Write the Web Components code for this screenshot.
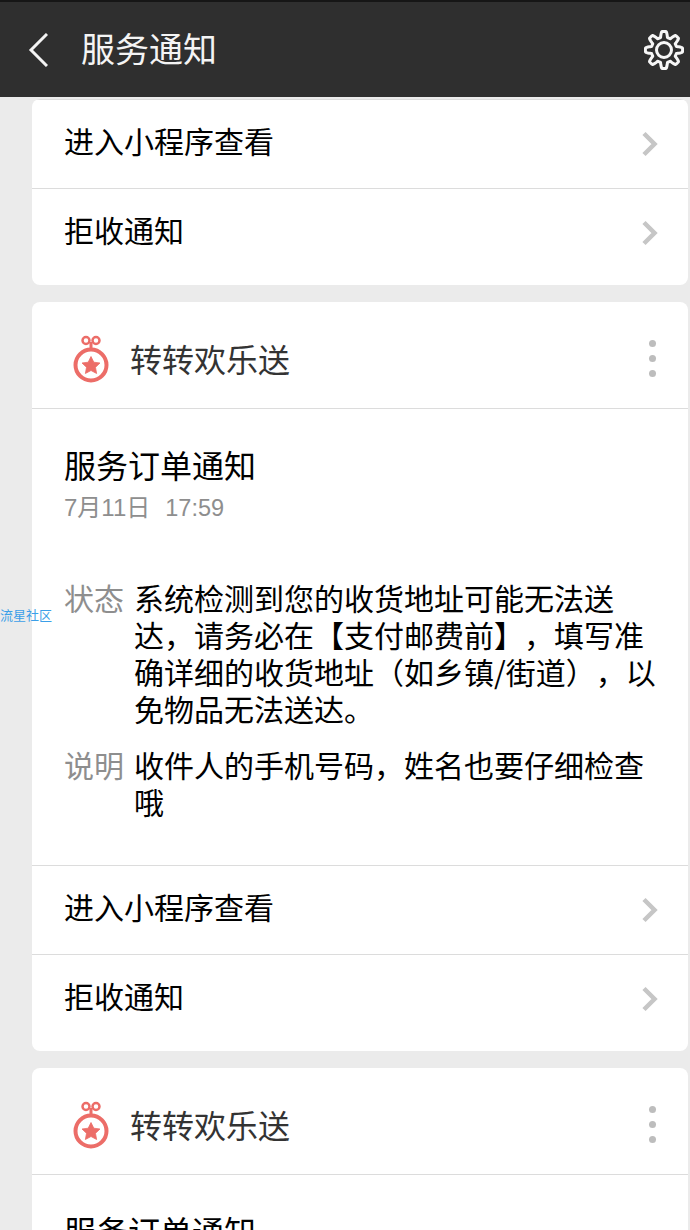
<!DOCTYPE html>
<html lang="zh"><head><meta charset="utf-8"><title>服务通知</title>
<style>
html,body{margin:0;padding:0;height:1230px;overflow:hidden;background:#ebebeb;font-family:"Noto Sans CJK SC","Noto Sans",sans-serif;}
main{display:flex;flex-direction:column;gap:17px;padding:2px 2px 0 32px;position:relative;}
water-mark{position:absolute;left:0;top:510px;}
</style></head><body>
<template id="t-header"><style>
:host{display:flex;align-items:center;height:97px;box-sizing:border-box;background:#2f2f2f;border-top:2px solid #161616;color:#f4f4f4;padding:0 6px 0 28px;}
h1{margin:0 0 0 33px;font:400 34px/44px "Noto Sans CJK SC",sans-serif;flex:1;position:relative;top:-2px;}
svg{display:block;}
</style><svg width="20" height="34" viewBox="0 0 20 34"><path d="M19 1 3 17l16 16" fill="none" stroke="#f4f4f4" stroke-width="3"/></svg><h1><slot></slot></h1>
<gear-icon></gear-icon>
</template>
<template id="t-card"><style>
:host{display:block;background:#fff;border-radius:8px;overflow:hidden;}
</style><slot></slot></template>
<template id="t-head"><style>
:host{display:flex;align-items:center;height:106px;border-bottom:1px solid #dcdcdc;padding:0 32px 0 41px;color:#333;font-size:32px;text-spacing-trim:space-all;}
span{flex:1;margin-left:21px;line-height:44px;position:relative;top:3px;}
i{display:flex;flex-direction:column;gap:8px;margin-top:6px;}
b{display:block;width:7px;height:7px;border-radius:50%;background:#bdbdbd;}
svg{display:block;margin-top:8px;}
</style>
<svg width="36" height="48" viewBox="0 0 36 48"><g fill="none" stroke="#ec6d68"><circle cx="18" cy="30" r="15.500" stroke-width="4"/><circle cx="13" cy="5.500" r="3.500" stroke-width="2.500"/><circle cx="23" cy="5.500" r="3.500" stroke-width="2.500"/><path d="M18 7v8" stroke-width="3"/></g><path d="M18 21.500l2.800 5.700 6.200.8-4.500 4.300 1.100 6.200-5.600-3-5.600 3 1.100-6.200L9 28l6.200-.8z" fill="#ec6d68" stroke="#ec6d68" stroke-width=".8" stroke-linejoin="round"/></svg>
<span><slot></slot></span><i><b></b><b></b><b></b></i></template>
<template id="t-body"><style>
:host{display:block;padding:35px 30px 45px 32px;color:#000;text-spacing-trim:space-all;}
h2{margin:0;font:400 32px/40px "Noto Sans CJK SC",sans-serif;}
time{display:block;margin-top:9px;font:24px/30px "Liberation Sans","Noto Sans CJK SC",sans-serif;color:#8e8e8e;}
.f{margin-top:56px;display:flex;flex-direction:column;gap:19px;}
</style><h2><slot name="title"></slot></h2><time><slot name="time"></slot></time><div class="f"><slot></slot></div></template>
<template id="t-field"><style>
:host{display:grid;grid-template-columns:70px 1fr;font-size:30px;line-height:37px;text-spacing-trim:space-all;}
span{color:#8e8e8e;}
div{color:#000;}
</style><span><slot name="k"></slot></span><div><slot></slot></div></template>
<template id="t-action"><style>
:host{display:flex;align-items:center;justify-content:space-between;height:88px;border-top:1px solid #dcdcdc;padding:0 30px 0 32px;font-size:30px;color:#000;}
:host([last]){padding-bottom:8px;}
span{position:relative;top:-4px;line-height:40px;}
svg{display:block;}
</style><span><slot></slot></span><svg width="17" height="26" viewBox="0 0 17 26"><path d="M3 2.500 13.500 13 3 23.500" fill="none" stroke="#c6c6c6" stroke-width="4.500"/></svg></template>
<template id="t-mark"><style>:host{display:block;font-size:13px;line-height:16px;color:#3b9fe8;white-space:nowrap;}</style><slot></slot></template>
<template id="t-gear"><style>:host{display:block;width:40px;height:40px;}svg{display:block;}</style><svg width="40" height="40" viewBox="0 0 40 40"><circle cx="20" cy="20" r="7.500" fill="none" stroke="#f6f6f6" stroke-width="3"/><path id="p" fill="none" stroke="#f6f6f6" stroke-width="3" stroke-linejoin="round"/></svg></template>
<app-header>服务通知</app-header>
<main>
<water-mark>流星社区</water-mark>
<notice-card><notice-action first>进入小程序查看</notice-action><notice-action last>拒收通知</notice-action></notice-card>
<notice-card>
<notice-head>转转欢乐送</notice-head>
<notice-body><span slot="title">服务订单通知</span><span slot="time">7月11日<span style="margin-left:15px;font-size:23.500px">17:59</span></span>
<notice-field><span slot="k">状态</span>系统检测到您的收货地址可能无法送达，请务必在【支付邮费前】，填写准确详细的收货地址（如乡镇/街道），以免物品无法送达。</notice-field>
<notice-field><span slot="k">说明</span>收件人的手机号码，姓名也要仔细检查哦</notice-field>
</notice-body>
<notice-action>进入小程序查看</notice-action><notice-action last>拒收通知</notice-action>
</notice-card>
<notice-card>
<notice-head>转转欢乐送</notice-head>
<notice-body><span slot="title">服务订单通知</span></notice-body>
</notice-card>
</main>
<script>
const map={'gear-icon':'t-gear','app-header':'t-header','notice-card':'t-card','notice-head':'t-head','notice-body':'t-body','notice-field':'t-field','notice-action':'t-action','water-mark':'t-mark'};
for(const [n,t] of Object.entries(map)){
 customElements.define(n,class extends HTMLElement{constructor(){super();const s=this.attachShadow({mode:'open'});s.append(document.getElementById(t).content.cloneNode(true));
  const p=s.getElementById('p');
  if(p){let d='';for(let i=0;i<240;i++){const a=i/240*2*Math.PI;const c=Math.max(-1,Math.min(1,1.7*Math.cos(8*a)));const r=15.7+2.9*c;d+=(i?'L':'M')+(20+r*Math.sin(a)).toFixed(2)+' '+(20-r*Math.cos(a)).toFixed(2);}p.setAttribute('d',d+'Z');}
 }});
}
</script>
</body></html>
